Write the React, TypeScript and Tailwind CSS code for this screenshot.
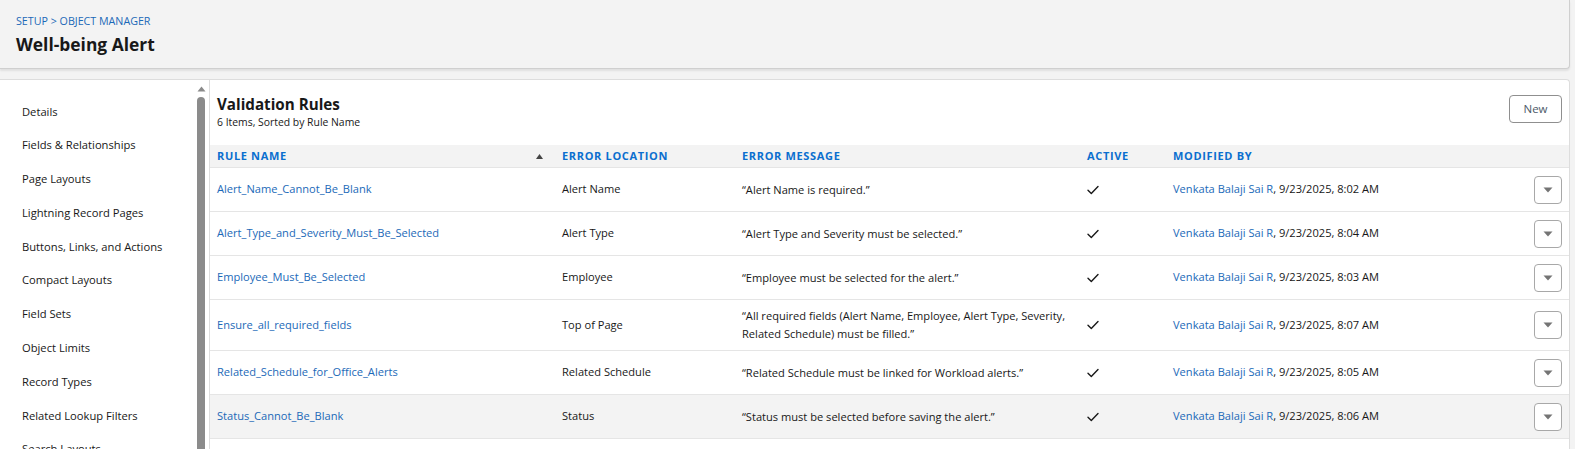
type Rule = {
  name: string;
  location: string;
  message: string;
  time: string;
};

const RULES: Rule[] = [
  { name: "Alert_Name_Cannot_Be_Blank", location: "Alert Name", message: "“Alert Name is required.”", time: "8:02 AM" },
  {
    name: "Alert_Type_and_Severity_Must_Be_Selected",
    location: "Alert Type",
    message: "“Alert Type and Severity must be selected.”",
    time: "8:04 AM",
  },
  {
    name: "Employee_Must_Be_Selected",
    location: "Employee",
    message: "“Employee must be selected for the alert.”",
    time: "8:03 AM",
  },
  {
    name: "Ensure_all_required_fields",
    location: "Top of Page",
    message: "“All required fields (Alert Name, Employee, Alert Type, Severity, Related Schedule) must be filled.”",
    time: "8:07 AM",
  },
  {
    name: "Related_Schedule_for_Office_Alerts",
    location: "Related Schedule",
    message: "“Related Schedule must be linked for Workload alerts.”",
    time: "8:05 AM",
  },
  {
    name: "Status_Cannot_Be_Blank",
    location: "Status",
    message: "“Status must be selected before saving the alert.”",
    time: "8:06 AM",
  },
];

const NAV = [
  "Details",
  "Fields & Relationships",
  "Page Layouts",
  "Lightning Record Pages",
  "Buttons, Links, and Actions",
  "Compact Layouts",
  "Field Sets",
  "Object Limits",
  "Record Types",
  "Related Lookup Filters",
  "Search Layouts",
];

const GRID = "grid grid-cols-[345px_180px_345px_86px_1fr_28px] pl-[7px] pr-[7px]";

function Check() {
  return (
    <svg width="12" height="10" viewBox="0 0 12 10" fill="none">
      <path d="M1 5.2 L4.3 8.4 L11 1.4" stroke="#181818" strokeWidth="1.4" strokeLinecap="round" strokeLinejoin="round" />
    </svg>
  );
}

function RowMenu() {
  return (
    <button className="flex h-[28px] w-[28px] items-center justify-center rounded-[4px] border border-[#a8a8a8] bg-white">
      <svg width="10" height="6" viewBox="0 0 10 6">
        <path d="M0.5 0.5 L9.5 0.5 L5 5.5 Z" fill="#747474" />
      </svg>
    </button>
  );
}

function Sidebar() {
  return (
    <div className="flex w-[209px] shrink-0">
      <ul className="flex-1 pl-[22px] pt-[15px]">
        {NAV.map((item) => (
          <li key={item} className="flex h-[33.8px] items-center text-[11.2px] text-[#181818]">
            {item}
          </li>
        ))}
      </ul>
      <div className="flex w-[14px] flex-col items-center pr-[2px] pt-[6px]">
        <svg width="9" height="6" viewBox="0 0 9 6">
          <path d="M0.5 5.5 L4.5 0.5 L8.5 5.5 Z" fill="#8a8a8a" />
        </svg>
        <div className="mt-[5px] w-[8px] flex-1 rounded-t-[4px] bg-[#8b8b8b]" />
      </div>
    </div>
  );
}

export default function App() {
  return (
    <div className="h-[449px] w-[1575px] overflow-hidden bg-[#f3f3f3] font-['Open_Sans',sans-serif] text-[#181818]">
      <header className="mr-[5px] h-[69px] rounded-br-[4px] border-b border-r border-[#cfcfcf] bg-[#f3f3f3] pl-[16px] pt-[14px] shadow-[0_2px_2px_rgba(0,0,0,0.08)]">
        <div className="text-[10.7px] leading-[14px] text-[#1b69b8]">SETUP &gt; OBJECT MANAGER</div>
        <h1 className="mt-[4px] text-[17.4px] font-bold leading-[24px] text-[#181818]">Well-being Alert</h1>
      </header>

      <div className="mr-[5px] mt-[10px] flex h-[380px] rounded-tr-[4px] border-r border-t border-[#dddddd] bg-white">
        <Sidebar />

        <main className="flex-1 border-l border-[#dddddd]">
          <div className="flex items-start justify-between pl-[7px] pr-[7px] pt-[14px]">
            <div>
              <h2 className="text-[15.2px] font-bold leading-[20px]">Validation Rules</h2>
              <p className="text-[10.4px] leading-[16px]">6 Items, Sorted by Rule Name</p>
            </div>
            <button className="mt-[1px] h-[28px] w-[53px] rounded-[4px] border border-[#8f8f8f] bg-white text-[11.5px] text-[#4d5a68]">
              New
            </button>
          </div>

          <div className={`${GRID} mt-[15px] h-[23px] items-center border-b border-[#e5e5e5] bg-[#f3f3f3] text-[11px] font-bold uppercase tracking-[0.06em] text-[#0b6fcf]`}>
            <div className="flex items-center justify-between pr-[19px]">
              <span>Rule Name</span>
              <svg width="7" height="5" viewBox="0 0 7 5">
                <path d="M0 5 L3.5 0 L7 5 Z" fill="#444444" />
              </svg>
            </div>
            <div>Error Location</div>
            <div>Error Message</div>
            <div>Active</div>
            <div>Modified By</div>
            <div />
          </div>

          {RULES.map((rule, i) => (
            <div
              key={rule.name}
              className={`${GRID} min-h-[44px] items-center border-b border-[#e5e5e5] py-[7px] text-[11.1px] ${
                i === RULES.length - 1 ? "bg-[#f3f3f3]" : "bg-white"
              }`}
            >
              <a className="text-[#1b69b8]">{rule.name}</a>
              <div>{rule.location}</div>
              <div className="pr-[10px] leading-[18px]">{rule.message}</div>
              <div>
                <Check />
              </div>
              <div>
                <a className="text-[#1b69b8]">Venkata Balaji Sai R</a>, 9/23/2025, {rule.time}
              </div>
              <RowMenu />
            </div>
          ))}
        </main>
      </div>
    </div>
  );
}
